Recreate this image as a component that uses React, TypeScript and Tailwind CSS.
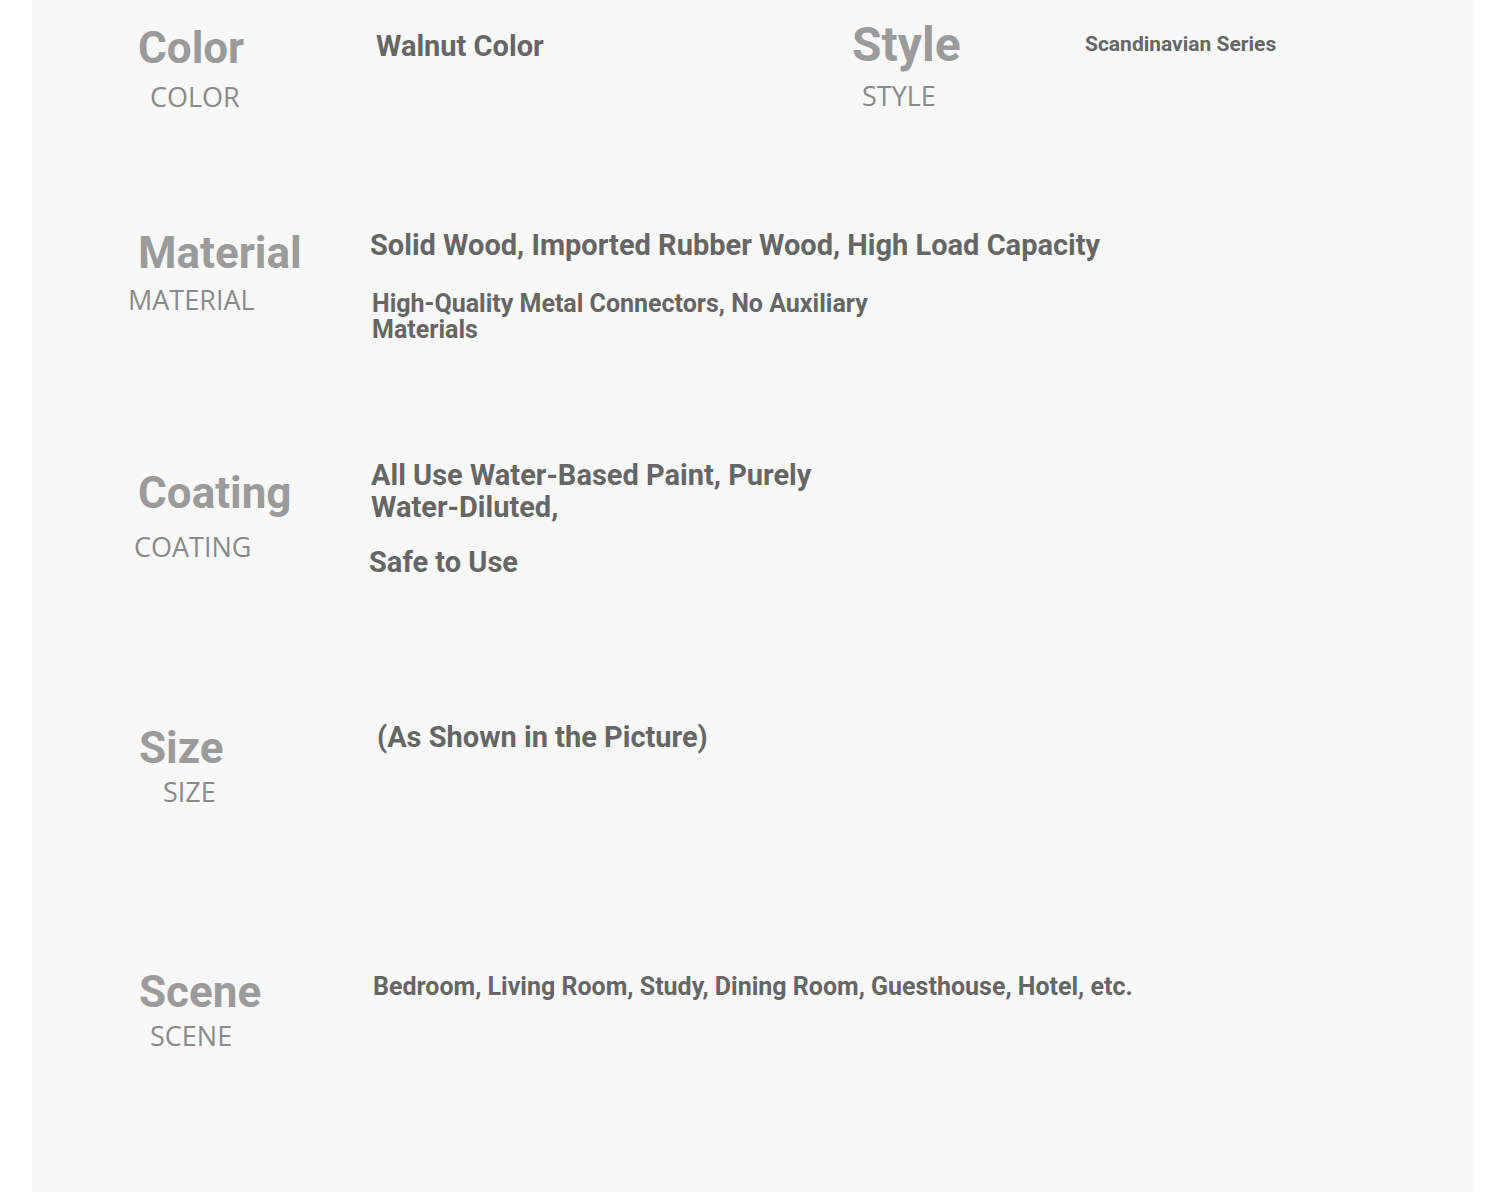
const roboto = { fontFamily: "Roboto, 'Liberation Sans', sans-serif" };
const openSans = { fontFamily: "'Open Sans', 'DejaVu Sans', sans-serif" };

function Label({ title, sub, titleSize, subPad }: { title: string; sub: string; titleSize: string; subPad: string }) {
  return (
    <div className="flex flex-col">
      <div className={`font-bold leading-none text-[#9b9b9b] ${titleSize}`}>{title}</div>
      <div className={`text-[27px] leading-none text-[#8a8a8a] ${subPad}`} style={openSans}>
        {sub}
      </div>
    </div>
  );
}

export default function App() {
  return (
    <div className="w-[1500px] h-[1195px] bg-white" style={roboto}>
      <div className="ml-[32px] w-[1441px] h-[1192px] bg-[#f8f8f8] flex flex-col">
        {/* color / style */}
        <div className="flex h-[200px]">
          <div className="w-[338px] pl-[106px] pt-[26px]">
            <Label title="Color" sub="COLOR" titleSize="text-[44px]" subPad="mt-[13px] pl-[12px]" />
          </div>
          <div className="w-[482px] pl-[6px] pt-[32px]">
            <p className="text-[29px] font-bold leading-none text-[#666]">Walnut Color</p>
          </div>
          <div className="w-[233px] pt-[21px]">
            <div className="flex flex-col">
              <div className="text-[48px] font-bold leading-none text-[#9b9b9b]">Style</div>
              <div className="mt-[13px] pl-[10px] text-[27px] leading-none text-[#8a8a8a]" style={openSans}>
                STYLE
              </div>
            </div>
          </div>
          <div className="pt-[34px]">
            <p className="text-[21px] font-bold leading-none text-[#666]">Scandinavian Series</p>
          </div>
        </div>

        {/* material */}
        <div className="flex h-[240px]">
          <div className="w-[338px] pl-[106px] pt-[31px]">
            <div className="flex flex-col">
              <div className="text-[44px] font-bold leading-none text-[#9b9b9b]">Material</div>
              <div className="mt-[11px] -ml-[10px] text-[27px] leading-none text-[#8a8a8a]" style={openSans}>
                MATERIAL
              </div>
            </div>
          </div>
          <div className="flex flex-col pt-[31px]">
            <p className="text-[29px] font-bold leading-none text-[#666]">
              Solid Wood, Imported Rubber Wood, High Load Capacity
            </p>
            <p className="mt-[31px] ml-[2px] w-[540px] text-[25px] font-bold leading-[26px] text-[#666]">
              High-Quality Metal Connectors, No Auxiliary Materials
            </p>
          </div>
        </div>

        {/* coating */}
        <div className="flex h-[250px]">
          <div className="w-[338px] pl-[106px] pt-[31px]">
            <div className="flex flex-col">
              <div className="text-[44px] font-bold leading-none text-[#9b9b9b]">Coating</div>
              <div className="mt-[18px] -ml-[4px] text-[27px] leading-none text-[#8a8a8a]" style={openSans}>
                COATING
              </div>
            </div>
          </div>
          <div className="flex flex-col pt-[19px]">
            <p className="ml-[1px] w-[520px] text-[29px] font-bold leading-[32px] text-[#666]">
              All Use Water-Based Paint, Purely Water-Diluted,
            </p>
            <p className="mt-[25px] -ml-[1px] text-[29px] font-bold leading-none text-[#666]">Safe to Use</p>
          </div>
        </div>

        {/* size */}
        <div className="flex h-[250px]">
          <div className="w-[338px] pl-[107px] pt-[36px]">
            <Label title="Size" sub="SIZE" titleSize="text-[44px]" subPad="mt-[8px] pl-[24px]" />
          </div>
          <div className="pl-[7px] pt-[33px]">
            <p className="text-[29px] font-bold leading-none text-[#666]">(As Shown in the Picture)</p>
          </div>
        </div>

        {/* scene */}
        <div className="flex flex-1">
          <div className="w-[338px] pl-[107px] pt-[30px]">
            <Label title="Scene" sub="SCENE" titleSize="text-[44px]" subPad="mt-[8px] pl-[11px]" />
          </div>
          <div className="pl-[3px] pt-[34px]">
            <p className="text-[25px] font-bold leading-none text-[#666]">
              Bedroom, Living Room, Study, Dining Room, Guesthouse, Hotel, etc.
            </p>
          </div>
        </div>
      </div>
    </div>
  );
}
